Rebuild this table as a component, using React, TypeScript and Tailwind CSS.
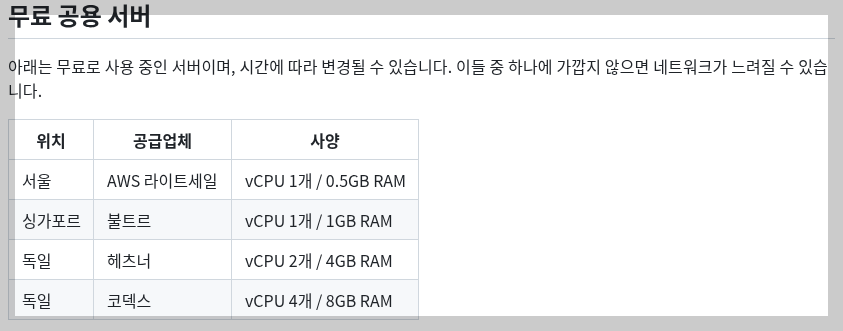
const servers = [
  { location: "서울", provider: "AWS 라이트세일", spec: "vCPU 1개 / 0.5GB RAM" },
  { location: "싱가포르", provider: "불트르", spec: "vCPU 1개 / 1GB RAM" },
  { location: "독일", provider: "헤츠너", spec: "vCPU 2개 / 4GB RAM" },
  { location: "독일", provider: "코덱스", spec: "vCPU 4개 / 8GB RAM" },
];

const cell = "whitespace-nowrap border border-[#d0d7de] px-[13px] py-[7.5px]";

export default function App() {
  return (
    <div className="relative h-[331px] overflow-hidden bg-white font-['Noto_Sans_CJK_KR','Noto_Sans',sans-serif] text-[#1f2328]">
      <div className="px-2">
        <h2 className="border-b border-[#d0d7de] pb-[8px] text-2xl leading-[30px] font-bold">
          무료 공용 서버
        </h2>
        <p className="mt-[15px] mb-[17px] text-base leading-6 tracking-[0.15px]">
          아래는 무료로 사용 중인 서버이며, 시간에 따라 변경될 수 있습니다. 이들 중 하나에 가깝지 않으면 네트워크가
          느려질 수 있습니다.
        </p>
        <table className="w-[411px] table-fixed border-collapse text-base leading-6">
          <thead>
            <tr>
              <th className={`${cell} w-[85px] font-bold`}>위치</th>
              <th className={`${cell} w-[138px] font-bold`}>공급업체</th>
              <th className={`${cell} w-[187px] font-bold`}>사양</th>
            </tr>
          </thead>
          <tbody>
            {servers.map((s, i) => (
              <tr key={i} className={i % 2 === 1 ? "bg-[#f6f8fa]" : ""}>
                <td className={cell}>{s.location}</td>
                <td className={cell}>{s.provider}</td>
                <td className={cell}>{s.spec}</td>
              </tr>
            ))}
          </tbody>
        </table>
      </div>
      {/* grey frame laid over the page */}
      <div className="pointer-events-none absolute inset-0 border-[15px] border-[#cbcbcb] mix-blend-multiply" />
    </div>
  );
}
